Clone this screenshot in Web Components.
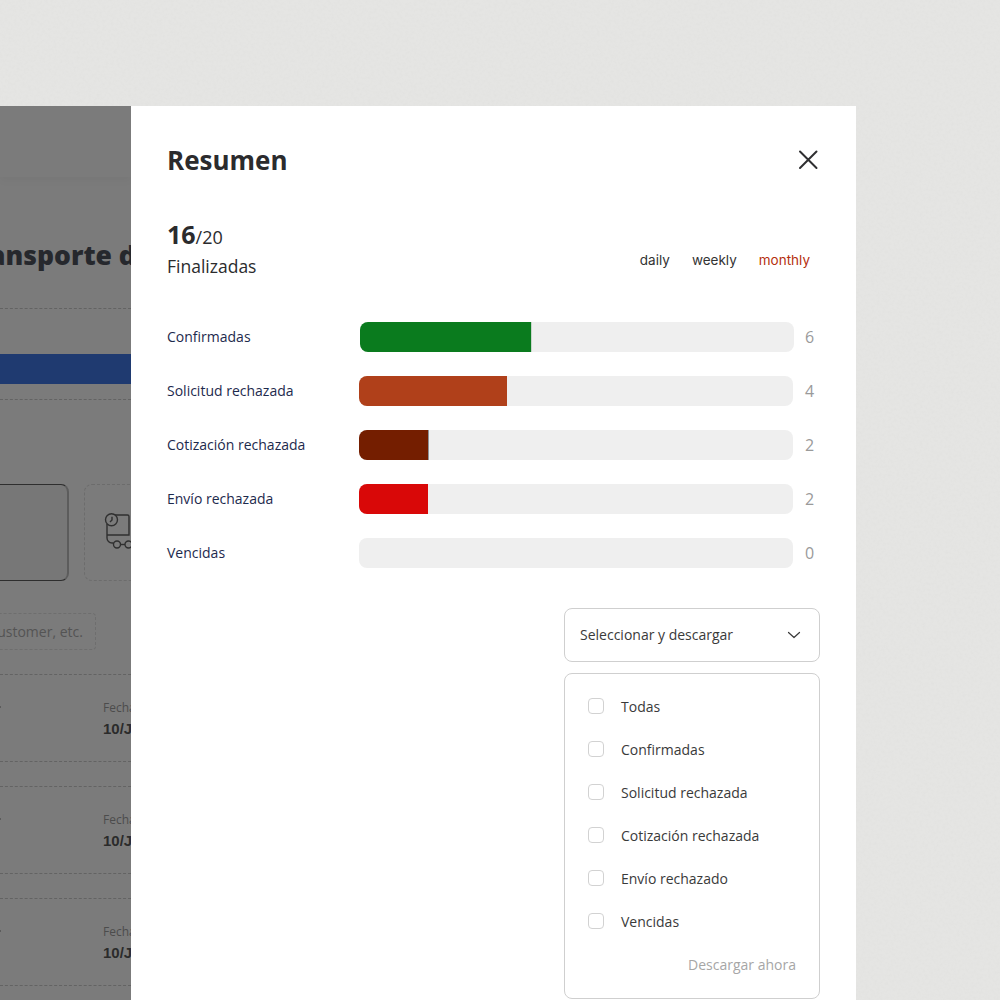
<!DOCTYPE html>
<html lang="es">
<head>
<meta charset="utf-8">
<title>Resumen</title>
<style>
html, body { margin: 0; height: 1000px; overflow: hidden; background: #e5e5e3; }
body { font-family: "Open Sans", "Liberation Sans", sans-serif; }
</style>
</head>
<body>
<paper-grain></paper-grain>
<summary-screen>
  <dimmed-page slot="behind"></dimmed-page>
  <summary-panel slot="panel">
    <h-stat slot="stat" done="16" total="20" label="Finalizadas"></h-stat>
    <period-tabs slot="tabs"></period-tabs>
    <status-bar slot="bars" label="Confirmadas" value="6" fill="171" color="#0a7b1e" edge="#c9d6cb" shift="1"></status-bar>
    <status-bar slot="bars" label="Solicitud rechazada" value="4" fill="148" color="#b0401a"></status-bar>
    <status-bar slot="bars" label="Cotización rechazada" value="2" fill="69" color="#741e00" edge="#8d9299"></status-bar>
    <status-bar slot="bars" label="Envío rechazada" value="2" fill="69" color="#d90808"></status-bar>
    <status-bar slot="bars" label="Vencidas" value="0" fill="0" color="#efefef"></status-bar>
    <download-select slot="download">
      <check-row>Todas</check-row>
      <check-row>Confirmadas</check-row>
      <check-row>Solicitud rechazada</check-row>
      <check-row>Cotización rechazada</check-row>
      <check-row>Envío rechazado</check-row>
      <check-row>Vencidas</check-row>
    </download-select>
  </summary-panel>
</summary-screen>

<script>
const sans = `"Open Sans", "Liberation Sans", sans-serif`;

// faint paper noise under the whole screen
class PaperGrain extends HTMLElement {
  constructor() {
    super();
    this.attachShadow({ mode: "open" }).innerHTML = `
<style>
:host { position: absolute; inset: 0; display: block; pointer-events: none; }
svg { display: block; }
</style>
<svg width="1000" height="1000">
  <filter id="grain">
    <feTurbulence type="fractalNoise" baseFrequency="0.35" numOctaves="3" seed="7"/>
    <feColorMatrix values="0 0 0 0 0.45  0 0 0 0 0.45  0 0 0 0 0.44  0.5 0 0 0 -0.2"/>
  </filter>
  <rect width="1000" height="1000" filter="url(#grain)" opacity="0.22"/>
</svg>`;
  }
}

class SummaryScreen extends HTMLElement {
  constructor() {
    super();
    this.attachShadow({ mode: "open" }).innerHTML = `
<style>
:host { position: relative; display: flex; width: 856px; height: 894px; margin-top: 106px; overflow: hidden; }
::slotted([slot="behind"]) { flex: 0 0 131px; }
::slotted([slot="panel"]) { flex: 1; }
</style>
<slot name="behind"></slot>
<slot name="panel"></slot>`;
  }
}

class DimmedPage extends HTMLElement {
  constructor() {
    super();
    const row = `
<div class="row">
  <div class="tick"></div>
  <div class="date"><span>Fecha de entrega</span><b>10/Junio/2021</b></div>
</div>`;
    this.attachShadow({ mode: "open" }).innerHTML = `
<style>
:host { display: block; overflow: hidden; background: #7b7b7b; font-family: ${sans}; }
.inner { width: 131px; }
.top { height: 71px; box-shadow: 0 4px 8px rgba(0,0,0,.03); }
h1 { margin: 55px 0 0 -39px; width: 400px; height: 46px; font-size: 26.5px; line-height: 46px; font-weight: 800; color: #26282d; white-space: nowrap; }
.rule { height: 0; border-top: 1px dashed #636363; }
.r1 { margin-top: 30px; }
.blue { height: 30px; margin-top: 45px; background: #1f3a70; }
.r2 { margin-top: 15px; }
.cards { display: flex; gap: 16px; margin: 84px 0 0 -40px; }
.card { flex: 0 0 109px; height: 97px; box-sizing: border-box; border-radius: 8px; border: 1px solid #2e2e2e; border-right: 2px solid #5c5c5c; background: #777; }
.card + .card { flex: 0 0 200px; margin-left: -1px; border: 1px dashed #6c6c6c; background: none; display: flex; padding: 29px 0 0 21px; }
svg { display: block; flex: none; overflow: visible; }
.search { width: 181px; height: 37px; box-sizing: border-box; margin: 32px 0 0 -85px; padding-right: 18px; border: 1px dashed #6e6e6e; border-radius: 4px; font-size: 14px; line-height: 35px; color: #545454; text-align: right; white-space: nowrap; }
.list { margin-top: 24px; }
.row { position: relative; height: 86px; border-top: 1px dashed #636363; border-bottom: 1px dashed #636363; margin-bottom: 24px; padding-left: 103px; }
.tick { position: absolute; left: 0; top: 31px; width: 1px; height: 2px; background: #5c5c5c; }
.date { padding-top: 25px; width: 28px; overflow: hidden; white-space: nowrap; }
.date span { display: block; font-size: 12px; line-height: 15px; color: #4c4c4c; }
.date b { display: block; margin-top: 4px; font-size: 15px; line-height: 20px; color: #2b2b2b; font-family: "Liberation Sans", sans-serif; }
</style>
<div class="inner">
  <div class="top"></div>
  <h1>Transporte de carga</h1>
  <div class="rule r1"></div>
  <div class="blue"></div>
  <div class="rule r2"></div>
  <div class="cards">
    <div class="card"></div>
    <div class="card">
      <svg width="40" height="40" viewBox="0 0 40 40" fill="none" stroke="#303030" stroke-width="1.4">
        <path d="M6 1H21.5a1.5 1.5 0 0 1 1.5 1.5V21H1"/>
        <path d="M1 10V24a5 5 0 0 0 5 5H7.5"/>
        <circle cx="5.5" cy="5.7" r="6" fill="#7b7b7b"/>
        <path d="M6 2.7V6L4 8"/>
        <circle cx="11" cy="30.5" r="3.5"/>
        <path d="M14.5 30.5h4.500"/>
        <circle cx="22.5" cy="30.5" r="3.5"/>
      </svg>
    </div>
  </div>
  <div class="search">Buscar por customer, etc.</div>
  <div class="list">${row}${row}${row}</div>
</div>`;
  }
}

class SummaryPanel extends HTMLElement {
  constructor() {
    super();
    this.attachShadow({ mode: "open" }).innerHTML = `
<style>
:host { display: block; background: #fff; box-sizing: border-box; padding: 0 36px; font-family: ${sans}; color: #2b2b2d; }
header { display: flex; align-items: center; justify-content: space-between; height: 108px; padding-bottom: 2px; box-sizing: content-box; }
h2 { margin: 0; font-size: 26px; line-height: 108px; font-weight: 700; }
svg { display: block; margin-right: 2px; }
.summary { display: flex; justify-content: space-between; align-items: flex-end; height: 64px; }
.bars { display: flex; flex-direction: column; gap: 24px; margin-top: 42px; }
.download { display: flex; justify-content: flex-end; margin-top: 40px; }
</style>
<header>
  <h2>Resumen</h2>
  <svg width="20" height="20" viewBox="0 0 20 20" fill="none" stroke="#2f2f31" stroke-width="2" stroke-linecap="round"><path d="M2 1.500 18.500 18M18.500 1.500 2 18"/></svg>
</header>
<div class="summary"><slot name="stat"></slot><slot name="tabs"></slot></div>
<div class="bars"><slot name="bars"></slot></div>
<div class="download"><slot name="download"></slot></div>`;
  }
}

class HStat extends HTMLElement {
  connectedCallback() {
    this.attachShadow({ mode: "open" }).innerHTML = `
<style>
:host { display: block; }
.n { height: 32px; padding-top: 2px; font-size: 18px; line-height: 32px; }
b { font-size: 25px; }
.l { margin-top: 3px; font-size: 17.5px; line-height: 27px; font-weight: 500; }
</style>
<div class="n"><b>${this.getAttribute("done")}</b>/${this.getAttribute("total")}</div>
<div class="l">${this.getAttribute("label")}</div>`;
  }
}

class PeriodTabs extends HTMLElement {
  constructor() {
    super();
    this.attachShadow({ mode: "open" }).innerHTML = `
<style>
:host { display: flex; gap: 22px; padding-right: 10px; height: 29px; font-family: Inter, sans-serif; font-size: 13.500px; line-height: 18px; color: #333; }
.on { color: #b5300f; }
</style>
<span>daily</span><span>weekly</span><span class="on">monthly</span>`;
  }
}

class StatusBar extends HTMLElement {
  connectedCallback() {
    const shift = this.getAttribute("shift") ? 1 : 0;
    const edge = this.getAttribute("edge");
    this.attachShadow({ mode: "open" }).innerHTML = `
<style>
:host { display: flex; align-items: center; height: 30px; font-size: 14px; }
.label { flex: 0 0 ${192 + shift}px; margin-top: -2px; color: #1d2a4d; white-space: nowrap; }
.track { flex: 0 0 434px; height: 30px; border-radius: 8px; background: #efefef; overflow: hidden; }
.fill { height: 100%; width: ${this.getAttribute("fill")}px; background: ${this.getAttribute("color")}; ${edge ? `border-right: 1px solid ${edge};` : ""} }
.value { margin: -1px 0 0 ${12 - shift}px; font-size: 16px; color: #9a9a9a; }
</style>
<span class="label">${this.getAttribute("label")}</span>
<div class="track"><div class="fill"></div></div>
<span class="value">${this.getAttribute("value")}</span>`;
  }
}

class DownloadSelect extends HTMLElement {
  constructor() {
    super();
    this.attachShadow({ mode: "open" }).innerHTML = `
<style>
:host { display: flex; flex-direction: column; gap: 11px; width: 256px; font-size: 14px; color: #3a3a3a; }
.select, .menu { box-sizing: border-box; border: 1px solid #cfcfcf; border-radius: 8px; background: #fff; }
.select { display: flex; align-items: center; justify-content: space-between; height: 54px; padding: 0 18px 0 15px; }
.select span { margin-top: -2px; }
.menu { height: 326px; padding: 11px 23px 0; display: flex; flex-direction: column; }
.now { margin-top: 11px; line-height: 21px; text-align: right; color: #a6a6a6; }
</style>
<div class="select">
  <span>Seleccionar y descargar</span>
  <svg width="14" height="8" viewBox="0 0 14 8" fill="none" stroke="#3a3a3a" stroke-width="1.2" stroke-linecap="round" stroke-linejoin="round"><path d="M1.500 1.500 7 6.500l5.500-5"/></svg>
</div>
<div class="menu">
  <slot></slot>
  <div class="now">Descargar ahora</div>
</div>`;
  }
}

class CheckRow extends HTMLElement {
  constructor() {
    super();
    this.attachShadow({ mode: "open" }).innerHTML = `
<style>
:host { display: flex; align-items: center; height: 43px; gap: 17px; }
i { flex: none; width: 16px; height: 16px; margin-top: -1px; box-sizing: border-box; border: 1px solid #d2d2d2; border-radius: 4px; }
</style>
<i></i><slot></slot>`;
  }
}

customElements.define("paper-grain", PaperGrain);
customElements.define("summary-screen", SummaryScreen);
customElements.define("dimmed-page", DimmedPage);
customElements.define("summary-panel", SummaryPanel);
customElements.define("h-stat", HStat);
customElements.define("period-tabs", PeriodTabs);
customElements.define("status-bar", StatusBar);
customElements.define("download-select", DownloadSelect);
customElements.define("check-row", CheckRow);
</script>
</body>
</html>
